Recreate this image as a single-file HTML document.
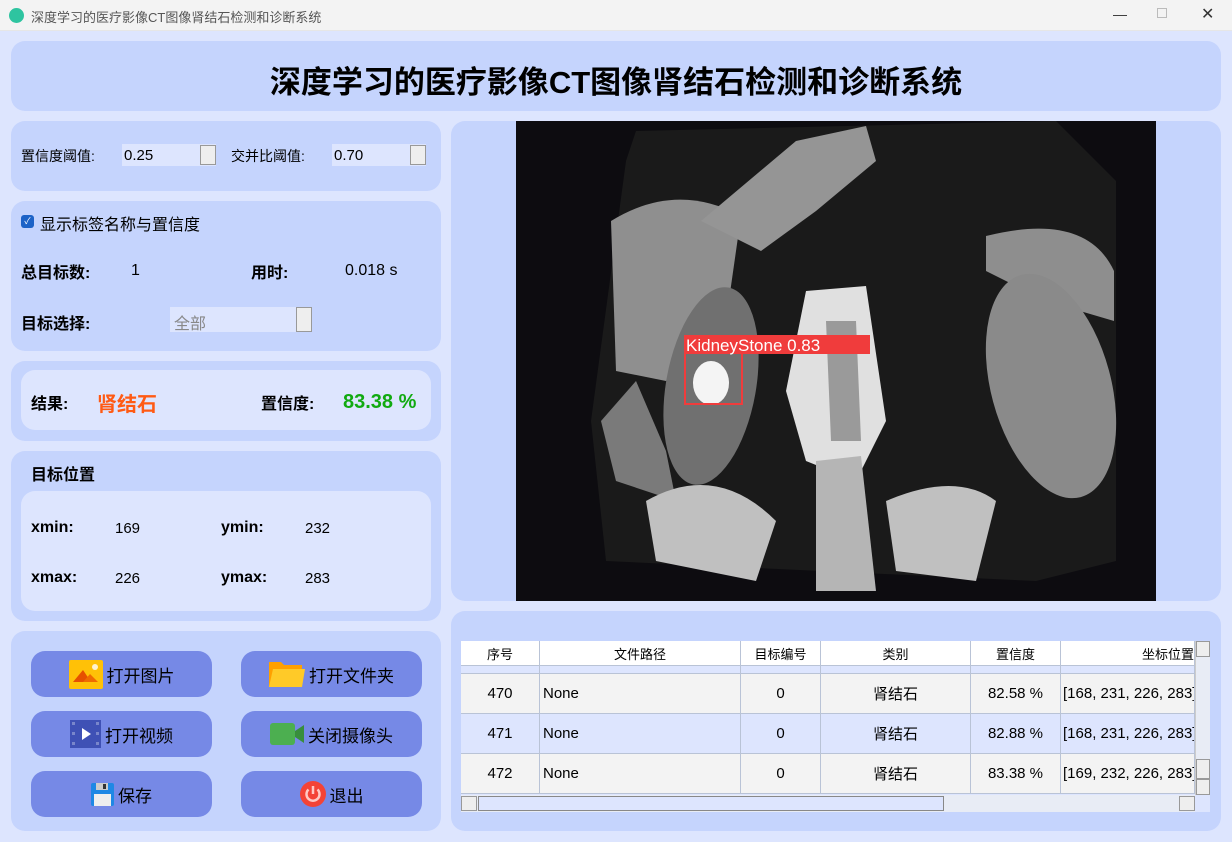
<!DOCTYPE html><html><head><meta charset="utf-8"><style>
*{margin:0;padding:0;box-sizing:border-box}
body{width:1232px;height:842px;background:#dde5fe;font-family:"Liberation Sans","Noto Sans CJK SC",sans-serif;position:relative;overflow:hidden;color:#000}
.a{position:absolute}
.p{position:absolute;background:#c5d4fd;border-radius:14px}
.in{position:absolute;background:#dde5fe;border-radius:14px}
.btn{position:absolute;background:#7689e6;border-radius:14px;width:181px;height:46px;display:flex;align-items:center;justify-content:center;font-size:17px;gap:4px}
.b{font-weight:bold}
.row{position:absolute;left:0;width:734px;display:flex;border-bottom:1px solid #b9c3d6;font-size:15px}
.row div{border-right:1px solid #b9c3d6;display:flex;align-items:center;justify-content:center;white-space:nowrap;overflow:hidden}
.row div.l{justify-content:flex-start;padding-left:3px}
.c1{width:79px}.c2{width:201px}.c3{width:80px}.c4{width:150px}.c5{width:90px}.c6{width:134px}
</style></head><body>
<div class="a" style="left:0;top:0;width:1232px;height:31px;background:#f3f3f3;border-bottom:1px solid #e6e6e6"></div>
<div class="a" style="left:9px;top:8px;width:15px;height:15px;border-radius:50%;background:#2ec4a0"></div>
<div class="a" style="left:31px;top:7px;font-size:13px;color:#555">深度学习的医疗影像CT图像肾结石检测和诊断系统</div>
<div class="a" style="left:1113px;top:6px;font-size:14px;color:#333">—</div>
<div class="a" style="left:1157px;top:8px;width:10px;height:10px;border:1px solid #bbb"></div>
<div class="a" style="left:1201px;top:4px;font-size:16px;color:#333">✕</div>

<div class="p" style="left:11px;top:41px;width:1210px;height:70px"></div>
<div class="a b" style="left:11px;top:57px;width:1210px;text-align:center;font-size:31px">深度学习的医疗影像CT图像肾结石检测和诊断系统</div>

<div class="p" style="left:11px;top:121px;width:430px;height:70px"></div>
<div class="a" style="left:21px;top:146px;font-size:14px">置信度阈值:</div>
<div class="a" style="left:122px;top:144px;width:94px;height:22px;background:#dde5fe;font-size:15px;padding:3px 2px">0.25</div>
<div class="a" style="left:200px;top:145px;width:16px;height:20px;border:1px solid #999;background:#eee"></div>
<div class="a" style="left:231px;top:146px;font-size:14px">交并比阈值:</div>
<div class="a" style="left:332px;top:144px;width:94px;height:22px;background:#dde5fe;font-size:15px;padding:3px 2px">0.70</div>
<div class="a" style="left:410px;top:145px;width:16px;height:20px;border:1px solid #999;background:#eee"></div>

<div class="p" style="left:11px;top:201px;width:430px;height:150px"></div>
<div class="a" style="left:21px;top:215px;width:13px;height:13px;background:#1d63c7;border-radius:3px;color:#fff;font-size:9px;text-align:center;line-height:13px">✓</div>
<div class="a" style="left:40px;top:211px;font-size:16px">显示标签名称与置信度</div>
<div class="a b" style="left:21px;top:259px;font-size:16px">总目标数:</div>
<div class="a" style="left:131px;top:262px;font-size:16px">1</div>
<div class="a b" style="left:251px;top:259px;font-size:16px">用时:</div>
<div class="a" style="left:345px;top:262px;font-size:16px">0.018 s</div>
<div class="a b" style="left:21px;top:310px;font-size:16px">目标选择:</div>
<div class="a" style="left:170px;top:307px;width:142px;height:25px;background:#dde5fe;color:#888;font-size:16px;padding:3px 4px">全部</div>
<div class="a" style="left:296px;top:307px;width:16px;height:25px;border:1px solid #999;background:#eee"></div>

<div class="p" style="left:11px;top:361px;width:430px;height:80px"></div>
<div class="in" style="left:21px;top:370px;width:410px;height:60px"></div>
<div class="a b" style="left:31px;top:390px;font-size:16px">结果:</div>
<div class="a b" style="left:97px;top:388px;font-size:20px;color:#ff5a14">肾结石</div>
<div class="a b" style="left:261px;top:390px;font-size:16px">置信度:</div>
<div class="a b" style="left:343px;top:391px;font-size:20px;color:#11aa11">83.38 %</div>

<div class="p" style="left:11px;top:451px;width:430px;height:170px"></div>
<div class="a b" style="left:31px;top:461px;font-size:16px">目标位置</div>
<div class="in" style="left:21px;top:491px;width:410px;height:120px"></div>
<div class="a b" style="left:31px;top:519px;font-size:16px">xmin:</div><div class="a" style="left:115px;top:520px;font-size:15px">169</div>
<div class="a b" style="left:221px;top:519px;font-size:16px">ymin:</div><div class="a" style="left:305px;top:520px;font-size:15px">232</div>
<div class="a b" style="left:31px;top:569px;font-size:16px">xmax:</div><div class="a" style="left:115px;top:570px;font-size:15px">226</div>
<div class="a b" style="left:221px;top:569px;font-size:16px">ymax:</div><div class="a" style="left:305px;top:570px;font-size:15px">283</div>

<div class="p" style="left:11px;top:631px;width:430px;height:200px"></div>
<div class="btn" style="left:31px;top:651px"><svg width="34" height="29"><rect width="34" height="29" rx="2" fill="#ffc107"/><path d="M4 22L14 10L22 22Z" fill="#e65100"/><path d="M14 22L21 14L29 22Z" fill="#ef6c00"/><circle cx="26" cy="7" r="3" fill="#fff3d0"/></svg>打开图片</div>
<div class="btn" style="left:241px;top:651px"><svg width="36" height="28"><path d="M0 2h12l3 3h18v22H0z" fill="#ffa000"/><path d="M4 9h32l-3 18H0z" fill="#ffca28"/></svg>打开文件夹</div>
<div class="btn" style="left:31px;top:711px"><svg width="31" height="28"><rect width="31" height="28" fill="#3f51b5"/><path d="M12 8l9 6-9 6z" fill="#fff"/><g fill="#7986cb"><rect x="2" y="2" width="3" height="3"/><rect x="2" y="12" width="3" height="3"/><rect x="2" y="22" width="3" height="3"/><rect x="26" y="2" width="3" height="3"/><rect x="26" y="12" width="3" height="3"/><rect x="26" y="22" width="3" height="3"/></g></svg>打开视频</div>
<div class="btn" style="left:241px;top:711px"><svg width="34" height="22"><rect width="25" height="22" rx="3" fill="#4caf50"/><path d="M25 8L34 2V20L25 14z" fill="#388e3c"/></svg>关闭摄像头</div>
<div class="btn" style="left:31px;top:771px"><svg width="23" height="23"><rect width="23" height="23" rx="2" fill="#1e88e5"/><rect x="5" y="0" width="12" height="7" fill="#ccc"/><rect x="12" y="1" width="3" height="5" fill="#333"/><rect x="3" y="11" width="17" height="12" fill="#eee"/></svg>保存</div>
<div class="btn" style="left:241px;top:771px"><svg width="26" height="26"><circle cx="13" cy="13" r="13" fill="#f44336"/><path d="M8.5 8.5a6.5 6.5 0 1 0 9 0" stroke="#ffc9c4" stroke-width="2.5" fill="none"/><path d="M13 5v8" stroke="#ffc9c4" stroke-width="2.5"/></svg>退出</div>

<div class="p" style="left:451px;top:121px;width:770px;height:480px"></div>
<svg class="a" style="left:516px;top:121px" width="640" height="480" viewBox="0 0 640 480">
<rect width="640" height="480" fill="#0d0c10"/>
<path d="M110 40L120 10L540 0L600 60L600 440L520 460L90 440L75 300Z" fill="#1a1a1a"/>
<path d="M95 100Q160 60 225 95L210 200L150 260L100 250Z" fill="#8f8f8f"/>
<path d="M185 100L280 20L350 5L360 40L300 90L245 130Z" fill="#959595"/>
<path d="M470 115Q570 90 598 150L598 200L530 180L470 150Z" fill="#8e8e8e"/>
<ellipse cx="535" cy="265" rx="60" ry="115" fill="#8a8a8a" transform="rotate(-15 535 265)"/>
<ellipse cx="195" cy="265" rx="45" ry="100" fill="#707070" transform="rotate(10 195 265)"/>
<path d="M120 260L150 330L160 380L100 360L85 300Z" fill="#7a7a7a"/>
<path d="M290 170L350 165L370 300L340 360L290 340L270 270Z" fill="#e0e0e0"/>
<path d="M310 200L340 200L345 320L315 320Z" fill="#9a9a9a"/>
<path d="M130 380Q200 340 260 400L240 460L140 440Z" fill="#c0c0c0"/>
<path d="M370 380Q440 350 480 380L460 460L380 450Z" fill="#c0c0c0"/>
<path d="M300 340L345 335L360 470L300 470Z" fill="#b5b5b5"/>
<ellipse cx="195" cy="262" rx="18" ry="22" fill="#f4f4f4"/>
<rect x="169" y="232" width="57" height="51" fill="none" stroke="#f03c3c" stroke-width="2"/>
<rect x="168" y="214" width="186" height="19" fill="#f03c3c"/>
<text x="170" y="230" fill="#fff" font-family="Liberation Sans" font-size="17">KidneyStone 0.83</text>
</svg>

<div class="p" style="left:451px;top:611px;width:770px;height:220px"></div>
<div class="a" style="left:461px;top:641px;width:749px;height:171px;background:#dde5fe;overflow:hidden">
<div class="row" style="top:0;height:25px;background:#fff;font-size:13px"><div class="c1">序号</div><div class="c2">文件路径</div><div class="c3">目标编号</div><div class="c4">类别</div><div class="c5">置信度</div><div class="c6" style="justify-content:flex-end">坐标位置</div></div>
<div class="row" style="top:25px;height:8px"><div class="c1"></div><div class="c2"></div><div class="c3"></div><div class="c4"></div><div class="c5"></div><div class="c6"></div></div>
<div class="row" style="top:33px;height:40px;background:#f3f3f3"><div class="c1">470</div><div class="c2 l">None</div><div class="c3">0</div><div class="c4">肾结石</div><div class="c5">82.58 %</div><div class="c6 l" style="padding-left:2px">[168, 231, 226, 283]</div></div>
<div class="row" style="top:73px;height:40px"><div class="c1">471</div><div class="c2 l">None</div><div class="c3">0</div><div class="c4">肾结石</div><div class="c5">82.88 %</div><div class="c6 l" style="padding-left:2px">[168, 231, 226, 283]</div></div>
<div class="row" style="top:113px;height:40px;background:#f3f3f3"><div class="c1">472</div><div class="c2 l">None</div><div class="c3">0</div><div class="c4">肾结石</div><div class="c5">83.38 %</div><div class="c6 l" style="padding-left:2px">[169, 232, 226, 283]</div></div>
<div class="a" style="left:734px;top:0;width:15px;height:154px;background:#e8ecf5;border-left:1px solid #ccc"></div>
<div class="a" style="left:735px;top:0;width:14px;height:16px;background:#eee;border:1px solid #999"></div>
<div class="a" style="left:735px;top:118px;width:14px;height:20px;background:#eee;border:1px solid #999"></div>
<div class="a" style="left:735px;top:138px;width:14px;height:16px;background:#eee;border:1px solid #999"></div>
<div class="a" style="left:0;top:154px;width:734px;height:17px;background:#e8ecf5"></div>
<div class="a" style="left:0;top:155px;width:16px;height:15px;background:#eee;border:1px solid #999"></div>
<div class="a" style="left:17px;top:155px;width:466px;height:15px;background:#dde5fe;border:1px solid #888"></div>
<div class="a" style="left:718px;top:155px;width:16px;height:15px;background:#eee;border:1px solid #999"></div>
</div>
</body></html>
